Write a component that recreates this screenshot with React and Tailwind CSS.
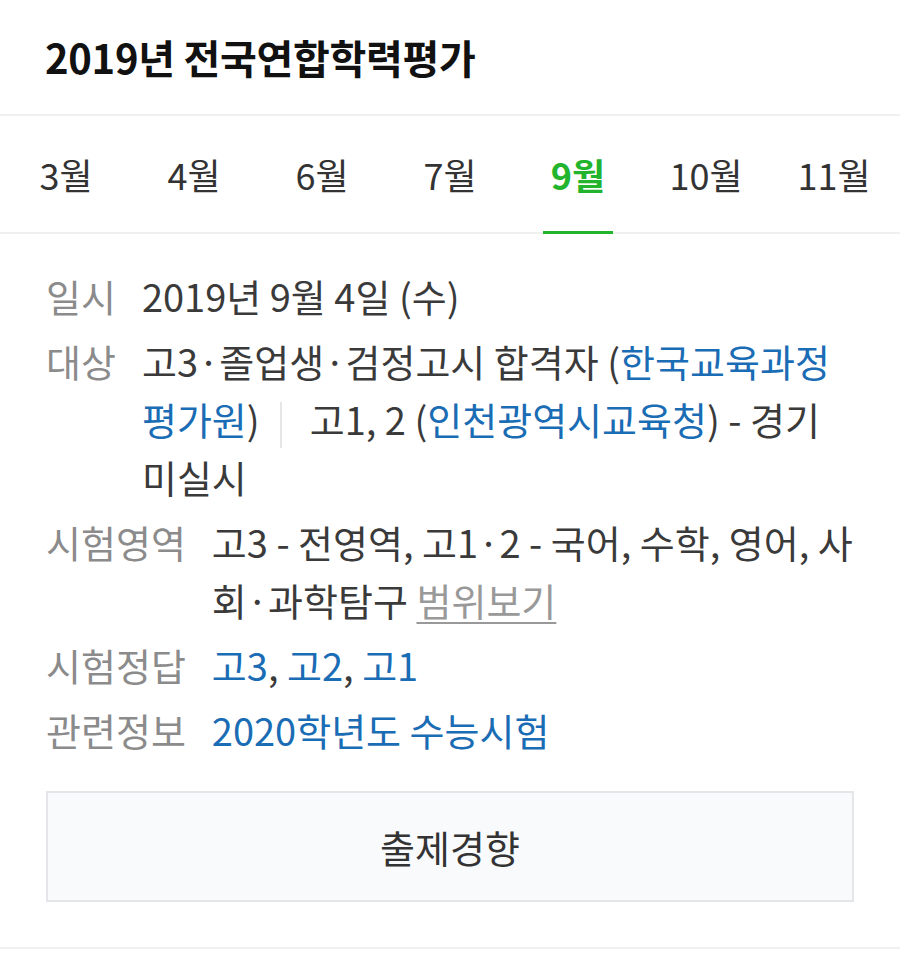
import React from "react";

const MONTHS = ["3월", "4월", "6월", "7월", "9월", "10월", "11월"];

function Row({ label, children }) {
  return (
    <div className="flex gap-[26px] leading-[58px]">
      <div className="whitespace-nowrap text-[#8b8b8b]">{label}</div>
      <div className="flex-1 text-[#3a3a3a]">{children}</div>
    </div>
  );
}

export default function App() {
  const active = "9월";
  const link = "text-[#1a6cb4]";

  return (
    <div
      className="w-[900px] h-[966px] bg-white"
      style={{ fontFamily: '"Noto Sans CJK KR", "Noto Sans", sans-serif' }}
    >
      {/* 제목 */}
      <div className="h-[116px] px-[45px] flex items-center border-b-2 border-[#eef0f2]">
        <h1 className="text-[40px] font-bold text-[#111] tracking-[-0.3px]">2019년 전국연합학력평가</h1>
      </div>

      {/* 월 탭 */}
      <div className="flex h-[118px] border-b-2 border-[#eef0f2] px-[2px]">
        {MONTHS.map((m) => (
          <div key={m} className="flex-1 flex justify-center">
            <div
              className={
                "relative flex items-center px-[8px] text-[36px] " +
                (m === active ? "font-bold text-[#22b42c]" : "text-[#333]")
              }
            >
              {m}
              {m === active && (
                <span className="absolute left-0 right-0 bottom-[-2px] h-[3px] bg-[#22b42c]" />
              )}
            </div>
          </div>
        ))}
      </div>

      {/* 상세 */}
      <div className="px-[46px] pt-[33px] text-[38px] flex flex-col gap-[7px]">
        <Row label="일시">2019년 9월 4일 (수)</Row>
        <Row label="대상">
          고3·졸업생·검정고시 합격자 (<span className={link}>한국교육과정평가원</span>)
          <span className="inline-block w-[2px] h-[46px] bg-[#e6e6e6] align-middle ml-[20px] mr-[28px]" />
          고1, 2 (<span className={link}>인천광역시교육청</span>) - 경기 미실시
        </Row>
        <Row label="시험영역">
          고3 - 전영역, 고1·2 - 국어, 수학, 영어, 사회·과학탐구{" "}
          <span className="text-[#999] underline underline-offset-[6px] decoration-2">범위보기</span>
        </Row>
        <Row label="시험정답">
          <span className={link}>고3</span>, <span className={link}>고2</span>,{" "}
          <span className={link}>고1</span>
        </Row>
        <Row label="관련정보">
          <span className={link}>2020학년도 수능시험</span>
        </Row>
      </div>

      <div className="px-[46px] pt-[32px] pb-[45px] border-b-2 border-[#eef0f2]">
        <button className="w-full h-[111px] bg-[#f9fafc] border-2 border-[#e4e6e9] text-[38px] text-[#333]">
          출제경향
        </button>
      </div>
    </div>
  );
}
